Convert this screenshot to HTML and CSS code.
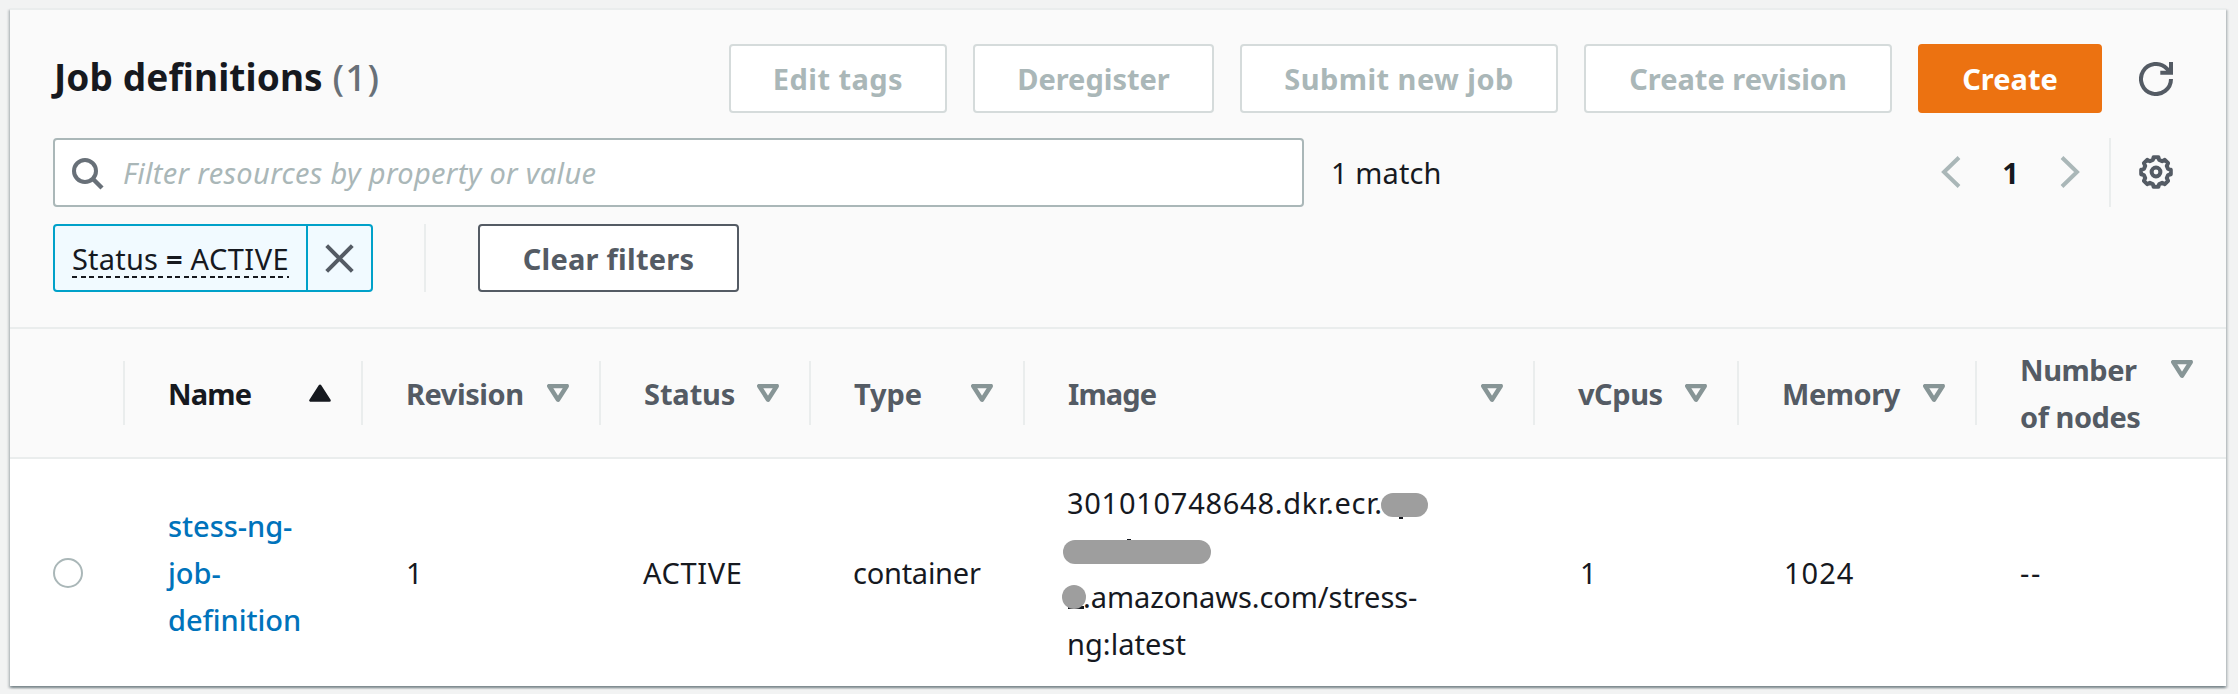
FILE: index.html
```html
<!DOCTYPE html>
<html lang="en">
<head>
<meta charset="utf-8">
<title>Job definitions</title>
<link rel="stylesheet" href="styles.css">
</head>
<body>
<svg class="defs" aria-hidden="true">
  <symbol id="sort" viewBox="0 0 22 18"><path d="M2.2 2H19.8L11 15.7Z" fill="none" stroke="#879596" stroke-width="4.4" stroke-linejoin="round"/></symbol>
  <symbol id="sort-up" viewBox="0 0 22 18"><path d="M1.5 16.5H20.5L11 1.8Z" fill="#16191f" stroke="#16191f" stroke-width="2.6" stroke-linejoin="round"/></symbol>
</svg>
<main class="panel">
  <header class="head">
    <div class="row title-row">
      <h1 class="title">Job definitions <span class="count">(1)</span></h1>
      <div class="actions">
        <button class="btn disabled edit">Edit tags</button>
        <button class="btn disabled dereg">Deregister</button>
        <button class="btn disabled submit">Submit new job</button>
        <button class="btn disabled revise">Create revision</button>
        <button class="btn primary">Create</button>
        <svg class="icon refresh" viewBox="0 0 34 34"><path d="M32 17A15 15 0 1 1 27.8 6.6L31 10.5M21.3 10.8H32V0" fill="none" stroke="#545b64" stroke-width="4"/></svg>
      </div>
    </div>
    <div class="row filter-row">
      <div class="search">
        <svg class="magnifier" viewBox="0 0 32 32"><circle cx="13" cy="13" r="11" fill="none" stroke="#687078" stroke-width="4"/><path d="M20.5 20.5L30 30" stroke="#687078" stroke-width="4.4"/></svg>
        <span class="placeholder">Filter resources by property or value</span>
      </div>
      <span class="matches">1 match</span>
      <div class="pager">
        <svg class="chev" viewBox="0 0 20 32"><path d="M18 1.5L3 16L18 30.5" fill="none" stroke="#aab7b8" stroke-width="4"/></svg>
        <b class="page">1</b>
        <svg class="chev" viewBox="0 0 20 32"><path d="M2 1.5L17 16L2 30.5" fill="none" stroke="#aab7b8" stroke-width="4"/></svg>
      </div>
      <div class="settings">
        <svg class="icon gear" viewBox="-17 -17 34 34"><g fill="none" stroke="#545b64" stroke-width="4" stroke-linejoin="round"><path d="M14.8 2.35L12 3.2L10.8 6.1L12.1 8.8L8.8 12.1L6.1 10.8L3.2 12L2.35 14.8L-2.35 14.8L-3.2 12L-6.1 10.8L-8.8 12.1L-12.1 8.8L-10.8 6.1L-12 3.2L-14.8 2.35L-14.8 -2.35L-12 -3.2L-10.8 -6.1L-12.1 -8.8L-8.8 -12.1L-6.1 -10.8L-3.2 -12L-2.35 -14.8L2.35 -14.8L3.2 -12L6.1 -10.8L8.8 -12.1L12.1 -8.8L10.8 -6.1L12 -3.2L14.8 -2.35Z"/><circle r="4.4"/></g></svg>
      </div>
    </div>
    <div class="row token-row">
      <div class="token">
        <div class="token-label"><span class="token-text">Status <b>=</b> <span class="value">ACTIVE</span></span></div>
        <div class="token-close"><svg class="cross" viewBox="0 0 29 29"><path d="M1.7 1.7L27.3 27.3M27.3 1.7L1.7 27.3" stroke="#545b64" stroke-width="4"/></svg></div>
      </div>
      <span class="rule"></span>
      <button class="btn clear">Clear filters</button>
    </div>
  </header>
  <section class="grid columns">
    <div class="th"></div>
    <div class="th on"><span>Name</span><svg class="arrow"><use href="#sort-up"/></svg></div>
    <div class="th"><span>Revision</span><svg class="arrow"><use href="#sort"/></svg></div>
    <div class="th"><span class="wide">Status</span><svg class="arrow"><use href="#sort"/></svg></div>
    <div class="th"><span class="wide">Type</span><svg class="arrow"><use href="#sort"/></svg></div>
    <div class="th image-head"><span>Image</span><svg class="arrow"><use href="#sort"/></svg></div>
    <div class="th"><span>vCpus</span><svg class="arrow"><use href="#sort"/></svg></div>
    <div class="th"><span>Memory</span><svg class="arrow"><use href="#sort"/></svg></div>
    <div class="th last"><span>Number<br>of nodes</span><svg class="arrow"><use href="#sort"/></svg></div>
  </section>
  <section class="grid record">
    <div class="td pick"><span class="radio"></span></div>
    <div class="td"><a class="link">stess-ng-<br>job-<br>definition</a></div>
    <div class="td num">1</div>
    <div class="td active">ACTIVE</div>
    <div class="td container">container</div>
    <div class="td">
      <div class="image">
        <div class="account">301010748648.dkr.ecr.</div>
        <div class="blank"></div>
        <div class="host">.amazonaws.com/stress-</div>
        <div class="tag">ng:latest</div>
        <i class="tick tick-a"></i><i class="tick tick-b"></i><i class="tick tick-c"></i>
        <i class="mask mask-a"></i><i class="mask mask-b"></i><i class="mask mask-c"></i>
      </div>
    </div>
    <div class="td num vcpus">1</div>
    <div class="td num memory">1024</div>
    <div class="td dashes">--</div>
  </section>
</main>
</body>
</html>
```
FILE: styles.css
```css
* { box-sizing: border-box; }
body {
  margin: 0;
  height: 694px;
  padding: 8px 12px 8px 10px;
  background: #f2f3f3;
  color: #16191f;
  font: 29px/47px "Noto Sans", "Open Sans", sans-serif;
  letter-spacing: 0;
  overflow: hidden;
}
svg { display: block; flex: none; }
.defs { position: absolute; width: 0; height: 0; }
.panel {
  height: 678px;
  border-top: 2px solid #eaeded;
  background: #fff;
  box-shadow: 0 2px 2px 0 rgba(0, 28, 36, .3), 2px 2px 2px 0 rgba(0, 28, 36, .15), -2px 2px 2px 0 rgba(0, 28, 36, .15);
}

.head {
  height: 319px;
  padding: 34px 53px 0 43px;
  background: #fafafa;
  border-bottom: 2px solid #eaeded;
}
.row { display: flex; align-items: center; }
.title-row { height: 69px; justify-content: space-between; }
.title { margin: 0 0 3px 1px; font-size: 37px; line-height: 44px; letter-spacing: .1px; white-space: nowrap; }
.count { font-weight: 500; color: #687078; letter-spacing: 1.2px; }
.actions { display: flex; align-items: center; gap: 26px; }
.btn {
  height: 69px;
  padding: 1px 0 0;
  background: #fff;
  border: 2px solid #545b64;
  border-radius: 4px;
  color: #545b64;
  font: bold 29px/40px "Noto Sans", "Open Sans", sans-serif;
  letter-spacing: 0;
  white-space: nowrap;
}
.disabled { border-color: #d5dbdb; color: #aab7b8; }
.edit { width: 218px; letter-spacing: .45px; }
.dereg { width: 241px; }
.submit { width: 318px; letter-spacing: .45px; }
.revise { width: 308px; }
.primary { width: 184px; background: #ec7211; border-color: #ec7211; color: #fff; }
.icon { width: 34px; height: 34px; }
.refresh { margin-left: 11px; }
.gear { margin-bottom: 1px; }

.filter-row { height: 69px; margin-top: 25px; }
.search {
  display: flex;
  align-items: center;
  width: 1251px;
  height: 69px;
  padding-left: 17px;
  background: #fff;
  border: 2px solid #aab7b8;
  border-radius: 4px;
}
.magnifier { width: 32px; height: 32px; margin-top: 2px; }
.placeholder { margin-left: 19px; color: #aab7b8; font-style: italic; letter-spacing: .34px; }
.matches { margin-left: 27px; letter-spacing: .1px; }
.pager { display: flex; align-items: center; margin-left: auto; }
.chev { width: 20px; height: 32px; margin-bottom: 1px; }
.page { width: 99px; text-align: center; }
.settings {
  display: flex;
  align-items: center;
  justify-content: flex-end;
  width: 64px;
  height: 69px;
  margin-left: 29px;
  border-left: 2px solid #eaeded;
}

.token-row { height: 68px; margin-top: 17px; }
.token {
  display: flex;
  width: 320px;
  height: 68px;
  background: #f1faff;
  border: 2px solid #00a1c9;
  border-radius: 4px;
}
.token-label { flex: 1; padding: 9px 0 0 17px; border-right: 2px solid #00a1c9; }
.token-text {
  display: block;
  width: 217px;
  height: 43px;
  line-height: 47px;
  letter-spacing: .2px;
  white-space: nowrap;
  background: repeating-linear-gradient(90deg, #16191f 0 5px, transparent 5px 8.6px) left bottom / 100% 2px no-repeat;
}
.value { letter-spacing: .5px; }
.active { letter-spacing: .6px; }
.token-close { display: flex; align-items: center; justify-content: center; width: 63px; }
.cross { width: 29px; height: 29px; }
.rule { width: 2px; height: 68px; margin: 0 52px 0 51px; background: #eaeded; }
.clear { width: 261px; height: 68px; letter-spacing: .25px; }

.grid { display: grid; grid-template-columns: 115px 238px 238px 210px 214px 510px 204px 238px 249px; align-items: center; }
.columns { height: 130px; background: #fafafa; border-bottom: 2px solid #eaeded; }
.th {
  display: flex;
  align-items: flex-start;
  justify-content: space-between;
  min-height: 64px;
  padding: 8.5px 32px 0 42px;
  color: #545b64;
  font-weight: 700;
  letter-spacing: -.45px;
  white-space: nowrap;
  background: linear-gradient(#eaeded, #eaeded) right center / 2px 64px no-repeat;
}
.th span { margin-left: 1px; }
.last { padding-top: 0; padding-right: 33px; background: none; }
.on { color: #16191f; letter-spacing: -.8px; }
.image-head { letter-spacing: -.9px; }
.th .wide { letter-spacing: -.1px; }
.arrow { width: 22px; height: 18px; margin-top: 14px; }

.record { height: 227px; }
.td { padding: 0 0 0 42px; white-space: nowrap; }
.pick { padding-left: 43px; }
.radio { display: block; width: 30px; height: 30px; border: 2px solid #aab7b8; border-radius: 50%; }
.link { margin-left: 1px; color: #0073bb; font-weight: 500; letter-spacing: -.05px; display: block; }
.container { letter-spacing: -.25px; }
.num { padding-left: 43px; }
.vcpus { padding-left: 45px; }
.memory { padding-left: 45px; letter-spacing: 1px; }
.dashes { padding-left: 43px; letter-spacing: 1.6px; }
.image { position: relative; }
.account { letter-spacing: .72px; }
.blank { height: 47px; }
.host { padding-left: 16px; letter-spacing: -.07px; }
.tag { letter-spacing: .05px; }
.mask { position: absolute; height: 24px; border-radius: 12px; background: #9e9e9e; }
.mask-a { left: 314px; top: 14.5px; width: 47px; }
.mask-b { left: -4px; top: 61.5px; width: 148px; }
.mask-c { left: -5px; top: 106.5px; width: 24px; }
.tick { position: absolute; height: 3px; background: #16191f; }
.tick-a { left: 332px; top: 37px; width: 4px; }
.tick-b { left: 60px; top: 60px; width: 4px; }
.tick-c { left: 1px; top: 127px; width: 16px; }
```
